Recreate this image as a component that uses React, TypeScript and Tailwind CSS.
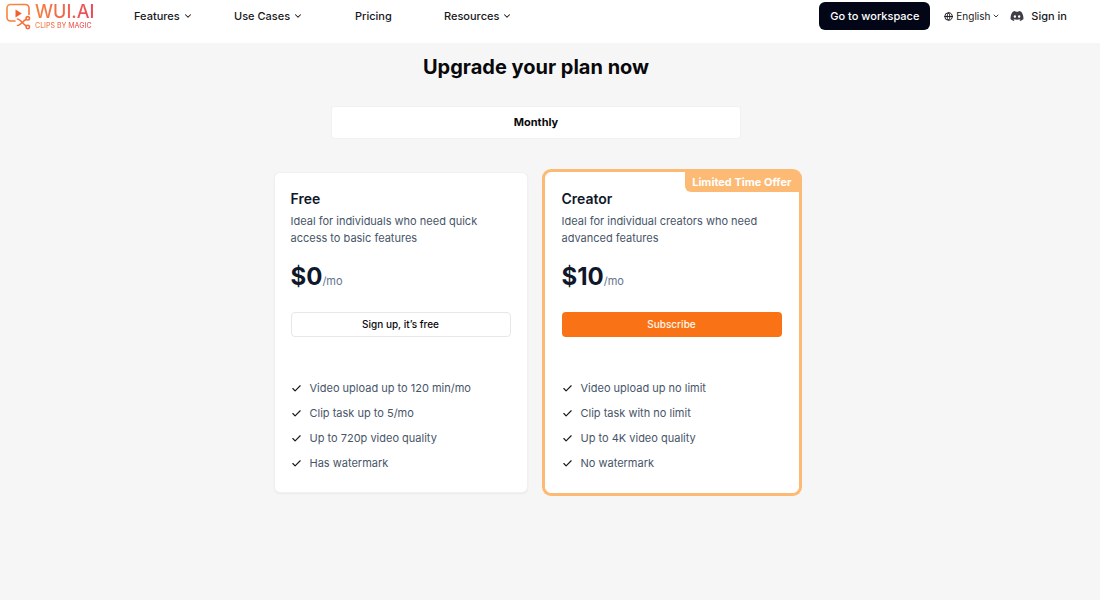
import React from 'react';
import { Check, ChevronDown, Globe } from 'lucide-react';
import { FaDiscord } from 'react-icons/fa';

type Plan = {
  name: string;
  description: string;
  price: string;
  cta: string;
  features: string[];
  badge?: string;
};

const plans: Plan[] = [
  {
    name: 'Free',
    description: 'Ideal for individuals who need quick access to basic features',
    price: '$0',
    cta: 'Sign up, it’s free',
    features: ['Video upload up to 120 min/mo', 'Clip task up to 5/mo', 'Up to 720p video quality', 'Has watermark'],
  },
  {
    name: 'Creator',
    description: 'Ideal for individual creators who need advanced features',
    price: '$10',
    cta: 'Subscribe',
    features: ['Video upload up no limit', 'Clip task with no limit', 'Up to 4K video quality', 'No watermark'],
    badge: 'Limited Time Offer',
  },
];

function Logo() {
  return (
    <a href="#" className="flex w-32 shrink-0 items-center gap-1 pl-[5px]">
      <svg width="26" height="28" viewBox="0 0 26 28" fill="none" strokeLinecap="round" strokeLinejoin="round">
        <defs>
          <linearGradient id="logo" x1="0" y1="0" x2="26" y2="28" gradientUnits="userSpaceOnUse">
            <stop stopColor="#f9913c" />
            <stop offset="1" stopColor="#f4633a" />
          </linearGradient>
        </defs>
        <g stroke="url(#logo)" strokeWidth="1.6">
          <path d="M10 19H5.500A3.500 3.500 0 0 1 2 15.500V6A3.500 3.500 0 0 1 5.500 2.500H20.500A3.500 3.500 0 0 1 24 6V12.500" />
          <path d="M12.500 17C15 17 18 22 21 23.800M12.500 23.500C15 23.500 18 19 21 17.500" />
          <circle cx="22.800" cy="16.300" r="1.700" />
          <circle cx="22.800" cy="25" r="1.700" />
        </g>
        <path d="M10.500 7.500V15.500L16.800 11.500Z" fill="#f2602f" />
      </svg>
      <span className="flex flex-col bg-gradient-to-r from-[#f5803a] to-[#e8485a] bg-clip-text text-transparent">
        <span className="text-[18px] leading-[20px] font-medium">WUI.AI</span>
        <span className="text-[7px] leading-[8px] whitespace-nowrap">CLIPS BY MAGIC</span>
      </span>
    </a>
  );
}

function NavMenu({ label }: { label: string }) {
  return (
    <button className="flex items-center gap-[3px]">
      {label} <ChevronDown size={10} strokeWidth={2.5} />
    </button>
  );
}

function Header() {
  return (
    <header className="flex items-center bg-white pr-[33px] pb-[11px] text-[11px] font-medium text-[#18181b]">
      <Logo />
      <nav className="flex flex-1 items-center pl-[6px]">
        <div className="w-[100px]"><NavMenu label="Features" /></div>
        <div className="w-[121px]"><NavMenu label="Use Cases" /></div>
        <div className="w-[89px]"><a href="#">Pricing</a></div>
        <NavMenu label="Resources" />
      </nav>
      <button className="my-[2px] h-7 rounded-md bg-[#020617] px-[11px] text-white">Go to workspace</button>
      <div className="ml-[14px] flex items-center gap-[3px] text-[10px] font-normal">
        <Globe size={9} strokeWidth={2.5} />
        <div className="relative">
          <select aria-label="Language" className="appearance-none bg-transparent pr-[9px]">
            <option>English</option>
          </select>
          <ChevronDown size={8} strokeWidth={2.5} className="pointer-events-none absolute inset-y-0 right-0 my-auto" />
        </div>
      </div>
      <a href="#" aria-label="Discord" className="ml-[10px] text-[#3f3f46]"><FaDiscord size={14} /></a>
      <a href="#" className="ml-[7px]">Sign in</a>
    </header>
  );
}

function PlanCard({ plan }: { plan: Plan }) {
  return (
    <section
      className={
        plan.badge
          ? 'relative rounded-md border border-white bg-white p-4 ring-3 ring-[#fdba74]'
          : 'relative rounded-md border border-gray-200/60 bg-white p-4 shadow-xs'
      }
    >
      {plan.badge && (
        <span className="absolute -top-px -right-px rounded-bl-md bg-[#fdba74] px-[7px] text-[11px] leading-5 font-bold text-white">
          {plan.badge}
        </span>
      )}
      <h2 className="text-sm leading-5 font-semibold text-[#0f172a]">{plan.name}</h2>
      <p className="mt-1 text-[11px] leading-[17px] text-[#475569]">{plan.description}</p>
      <p className="mt-[14px] flex items-baseline">
        <span className="text-2xl font-bold text-[#0f172a]">{plan.price}</span>
        <span className="text-[11px] text-[#64748b]">/mo</span>
      </p>
      <button
        className={
          plan.badge
            ? 'mt-[19px] h-[25px] w-full rounded bg-[#f97316] text-[10px] font-medium text-orange-50'
            : 'mt-[19px] h-[25px] w-full rounded border border-gray-200 bg-white text-[10px] font-medium text-[#09090b]'
        }
      >
        {plan.cta}
      </button>
      <ul className="mt-[43px] mb-1 space-y-2">
        {plan.features.map((feature) => (
          <li key={feature} className="flex items-center gap-2 text-[11px] leading-[17px] text-[#475569]">
            <Check size={11} strokeWidth={2.5} className="text-[#18181b]" /> {feature}
          </li>
        ))}
      </ul>
    </section>
  );
}

export default function App() {
  return (
    <div className="min-h-screen bg-[#f6f6f6] font-['Inter',sans-serif]">
      <Header />
      <main className="pt-2 pr-7 pb-12">
        <h1 className="text-center text-xl leading-8 font-bold text-[#09090b]">Upgrade your plan now</h1>
        <div className="mx-auto mt-[23px] max-w-[410px]">
          <button className="h-[33px] w-full rounded border border-gray-200/60 bg-white text-[11px] font-bold text-[#09090b]">
            Monthly
          </button>
        </div>
        <div className="mx-auto mt-[33px] grid max-w-[525px] grid-cols-2 gap-[17px]">
          {plans.map((plan) => (
            <PlanCard key={plan.name} plan={plan} />
          ))}
        </div>
      </main>
    </div>
  );
}
